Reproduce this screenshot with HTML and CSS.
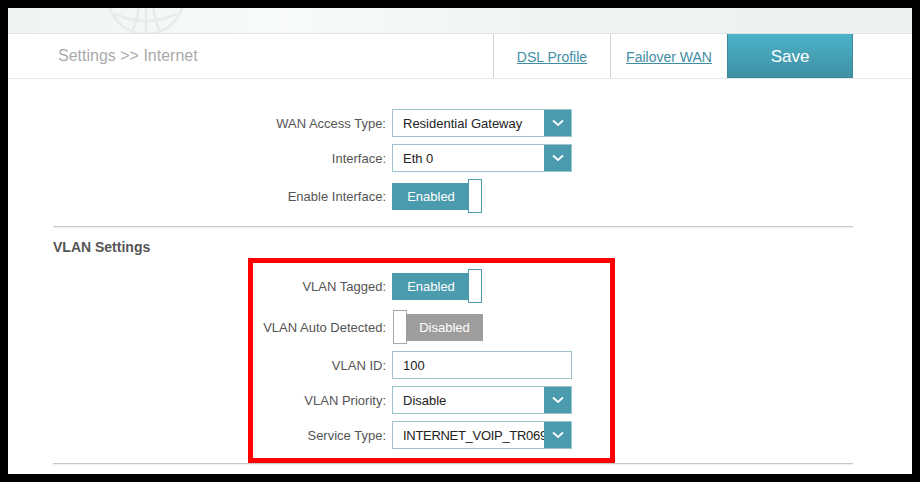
FILE: index.html
```html
<!DOCTYPE html>
<html lang="en">
<head>
    <meta charset="UTF-8">
    <meta name="viewport" content="width=device-width, initial-scale=1.0">
    <title>Settings - Internet</title>
    <link rel="stylesheet" href="styles.css">
</head>
<body>

    <div class="top-band">
        <svg class="globe" width="90" height="60" viewBox="0 0 90 60">
            <circle cx="45" cy="-4" r="38" fill="none" stroke="#e6ebeb" stroke-width="2.5"></circle>
            <path d="M45 -40 L45 34 M14 14 Q45 28 76 14 M27 -35 Q45 0 32 30 M63 -35 Q45 0 58 30" fill="none" stroke="#e6ebeb" stroke-width="2.5"></path>
        </svg>
    </div>

    <div class="crumb-bar">
        <div class="crumb">Settings &gt;&gt; Internet</div>
        <div class="tabs">
            <div class="tab"><a href="#">DSL Profile</a></div>
            <div class="tab"><a href="#">Failover WAN</a></div>
            <div class="tab save">Save</div>
        </div>
    </div>

    <div class="section">
        <div class="form-rows">
            <div class="row">
                <label>WAN Access Type:</label>
                <div class="select"><span>Residential Gateway</span><i class="arrow"><svg width="12" height="8" viewBox="0 0 12 8"><path d="M1 1.5 L6 6 L11 1.5" fill="none" stroke="#fff" stroke-width="1.8"/></svg></i></div>
            </div>
            <div class="row">
                <label>Interface:</label>
                <div class="select"><span>Eth 0</span><i class="arrow"><svg width="12" height="8" viewBox="0 0 12 8"><path d="M1 1.5 L6 6 L11 1.5" fill="none" stroke="#fff" stroke-width="1.8"/></svg></i></div>
            </div>
            <div class="row tall">
                <label>Enable Interface:</label>
                <div class="toggle on"><span class="bar">Enabled</span><span class="knob"></span></div>
            </div>
        </div>

        <div class="divider"></div>
        <h3>VLAN Settings</h3>

        <div class="vlan-box">
            <div class="row tall">
                <label>VLAN Tagged:</label>
                <div class="toggle on"><span class="bar">Enabled</span><span class="knob"></span></div>
            </div>
            <div class="row tall">
                <label>VLAN Auto Detected:</label>
                <div class="toggle off"><span class="knob"></span><span class="bar">Disabled</span></div>
            </div>
            <div class="row">
                <label>VLAN ID:</label>
                <div class="text-input">100</div>
            </div>
            <div class="row">
                <label>VLAN Priority:</label>
                <div class="select"><span>Disable</span><i class="arrow"><svg width="12" height="8" viewBox="0 0 12 8"><path d="M1 1.5 L6 6 L11 1.5" fill="none" stroke="#fff" stroke-width="1.8"/></svg></i></div>
            </div>
            <div class="row">
                <label>Service Type:</label>
                <div class="select narrow-text"><span>INTERNET_VOIP_TR069</span><i class="arrow"><svg width="12" height="8" viewBox="0 0 12 8"><path d="M1 1.5 L6 6 L11 1.5" fill="none" stroke="#fff" stroke-width="1.8"/></svg></i></div>
            </div>
        </div>

        <div class="divider bottom"></div>
    </div>

</body>
</html>
```

FILE: styles.css
```css
*{
    margin: 0;
    padding: 0;
    box-sizing: border-box;
}

html{
    background: #000;
}

body{
    margin: 8px;
    height: 466px;
    background: #fff;
    overflow: hidden;
    font-family: "Liberation Sans", Arial, sans-serif;
    font-size: 13px;
    color: #555;
}

.top-band{
    height: 26px;
    background: linear-gradient(90deg, #eef3f3 0%, #f9fbfb 30%, #eef3f3 60%, #ecf1f1 100%);
    border-bottom: 1px solid #dfe4e4;
    overflow: hidden;
}

.top-band .globe{
    display: block;
    margin-left: 93px;
    margin-top: -8px;
}

.crumb-bar{
    height: 45px;
    display: flex;
    align-items: stretch;
    border-bottom: 1px solid #e6e6e6;
}

.crumb{
    padding-left: 50px;
    padding-top: 13px;
    font-size: 16px;
    color: #aaa;
}

.tabs{
    margin-left: auto;
    margin-right: 59px;
    display: flex;
}

.tab{
    width: 117px;
    border-left: 1px solid #d4d4d4;
    display: flex;
    align-items: center;
    justify-content: center;
    padding-top: 2px;
    font-size: 14px;
}

.tab a{
    color: #3f8ea4;
}

.tab.save{
    width: 126px;
    color: #fff;
    font-size: 17px;
    border-left: none;
    background: linear-gradient(180deg, #4cb2c8 0%, #4090a5 100%);
    border: 1px solid #3d8aa0;
    border-top: none;
}

.section{
    margin: 0 59px 0 45px;
}

.form-rows{
    padding-top: 30px;
}

.row{
    display: flex;
    align-items: center;
    height: 28px;
    margin-bottom: 7px;
}

.row.tall{
    height: 34px;
}

.row label{
    text-align: right;
    padding-right: 6px;
    color: #555;
}

.form-rows .row label{
    width: 339px;
}

.select, .text-input{
    width: 180px;
    height: 28px;
    border: 1px solid #9fc3cc;
    display: flex;
    align-items: center;
    color: #222;
    position: relative;
    overflow: hidden;
    white-space: nowrap;
}

.select span, .text-input{
    padding-left: 10px;
}

.narrow-text span{
    letter-spacing: -0.3px;
}

.select .arrow{
    position: absolute;
    right: -1px;
    top: -1px;
    width: 28px;
    height: 28px;
    background: #4a9bad;
    display: flex;
    align-items: center;
    justify-content: center;
}

.toggle{
    display: flex;
    align-items: center;
}

.toggle .bar{
    width: 78px;
    height: 27px;
    display: flex;
    align-items: center;
    justify-content: center;
    color: #fff;
    background: #4a9bad;
}

.toggle .knob{
    width: 14px;
    height: 34px;
    background: #fff;
    border: 1px solid #4a9bad;
    margin-left: -2px;
}

.toggle.off .knob{
    border-color: #aaa;
    margin-left: 1px;
}

.toggle.off .bar{
    width: 77px;
    background: #9d9d9d;
    margin-left: -1px;
}

.divider{
    height: 2px;
    background: #c8c8c8;
    border-bottom: 1px solid #f0f0f0;
    margin-top: 13px;
}

h3{
    font-size: 14px;
    color: #555;
    padding-top: 11px;
    height: 30px;
}

.vlan-box{
    margin-left: 195px;
    width: 367px;
    border: 5px solid #f00;
    padding: 6px 37px 2px 10px;
}

.vlan-box .row label{
    width: 129px;
}

.divider.bottom{
    margin-top: 0;
}
```
